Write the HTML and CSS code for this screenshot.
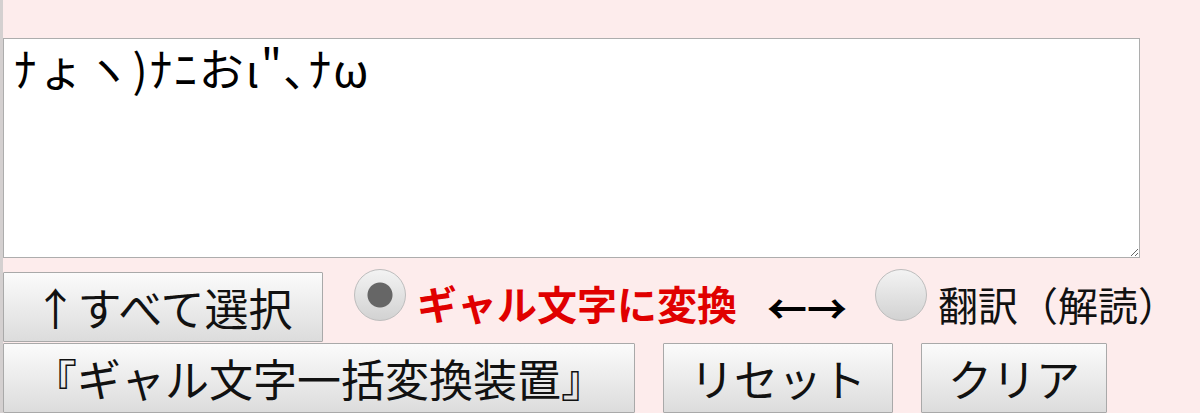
FILE: index.html
```html
<!DOCTYPE html>
<html lang="ja">
<head>
<meta charset="utf-8">
<title>ギャル文字一括変換装置</title>
<link rel="stylesheet" href="styles.css">
</head>
<body>
<div class="page">
  <textarea class="input">ﾅょヽ)ﾅﾆおι"､ﾅω</textarea>
  <div class="row row-top">
    <button class="btn btn-select">↑すべて選択</button>
    <label class="opt">
      <input type="radio" name="mode" class="radio radio-first" checked>
      <span class="opt-text opt-active">ギャル文字に変換</span>
    </label>
    <span class="arrows">←→</span>
    <label class="opt">
      <input type="radio" name="mode" class="radio">
      <span class="opt-text">翻訳（解読）</span>
    </label>
  </div>
  <div class="row row-bottom">
    <button class="btn btn-title">『ギャル文字一括変換装置』</button>
    <button class="btn btn-reset">リセット</button>
    <button class="btn btn-clear">クリア</button>
  </div>
</div>
</body>
</html>
```

FILE: styles.css
```css
html, body {
  margin: 0;
  padding: 0;
  background: #fdecec;
  overflow: hidden;
}

.page {
  box-sizing: border-box;
  min-height: 413px;
  border-left: 3px solid #d4d0d0;
  padding-top: 38px;
  font-family: "Noto Sans CJK JP", "Noto Sans", sans-serif;
  color: #111;
}

.input {
  display: block;
  box-sizing: border-box;
  width: 1137px;
  height: 220px;
  margin: 0;
  padding: 0 6px 0 10px;
  border: 1px solid #adadad;
  background: #fff;
  font-family: "Noto Sans CJK JP", "Noto Sans", sans-serif;
  font-size: 45px;
  line-height: 1.3;
  letter-spacing: 2px;
  color: #000;
  outline: none;
}

.row {
  display: flex;
  align-items: center;
}

.row-top {
  margin-top: 14px;
  height: 70px;
}

.row-bottom {
  margin-top: 1px;
  gap: 28px;
}

.btn {
  box-sizing: border-box;
  height: 70px;
  margin: 0;
  padding: 0;
  border: 1px solid #a9a9a9;
  border-radius: 1px;
  background: linear-gradient(#fbfbfb, #dcdcdc);
  font-family: "Noto Sans CJK JP", "Noto Sans", sans-serif;
  font-size: 44px;
  color: #111;
  line-height: 1;
}

.btn-select { width: 320px; }
.btn-title { width: 632px; }
.btn-reset { width: 230px; }
.btn-clear { width: 186px; }

.opt {
  display: flex;
  align-items: center;
}

.radio {
  appearance: none;
  -webkit-appearance: none;
  box-sizing: border-box;
  width: 52px;
  height: 52px;
  margin: 0 11px 24px 0;
  border: 1px solid #bdbdbd;
  border-radius: 50%;
  background: linear-gradient(#f3f3f3, #d2d2d2);
}

.radio:checked {
  background: radial-gradient(circle, #666 12px, rgba(102,102,102,0) 13px), linear-gradient(#f3f3f3, #d2d2d2);
}

.radio-first {
  margin-left: 31px;
}

.opt-text {
  font-size: 40px;
  color: #111;
  margin-bottom: 6px;
}

.opt-active {
  font-weight: bold;
  color: #e00000;
  margin-bottom: 8px;
}

.arrows {
  margin: 0 28px 0 30px;
  font-size: 40px;
  font-weight: bold;
  color: #000;
}
```
